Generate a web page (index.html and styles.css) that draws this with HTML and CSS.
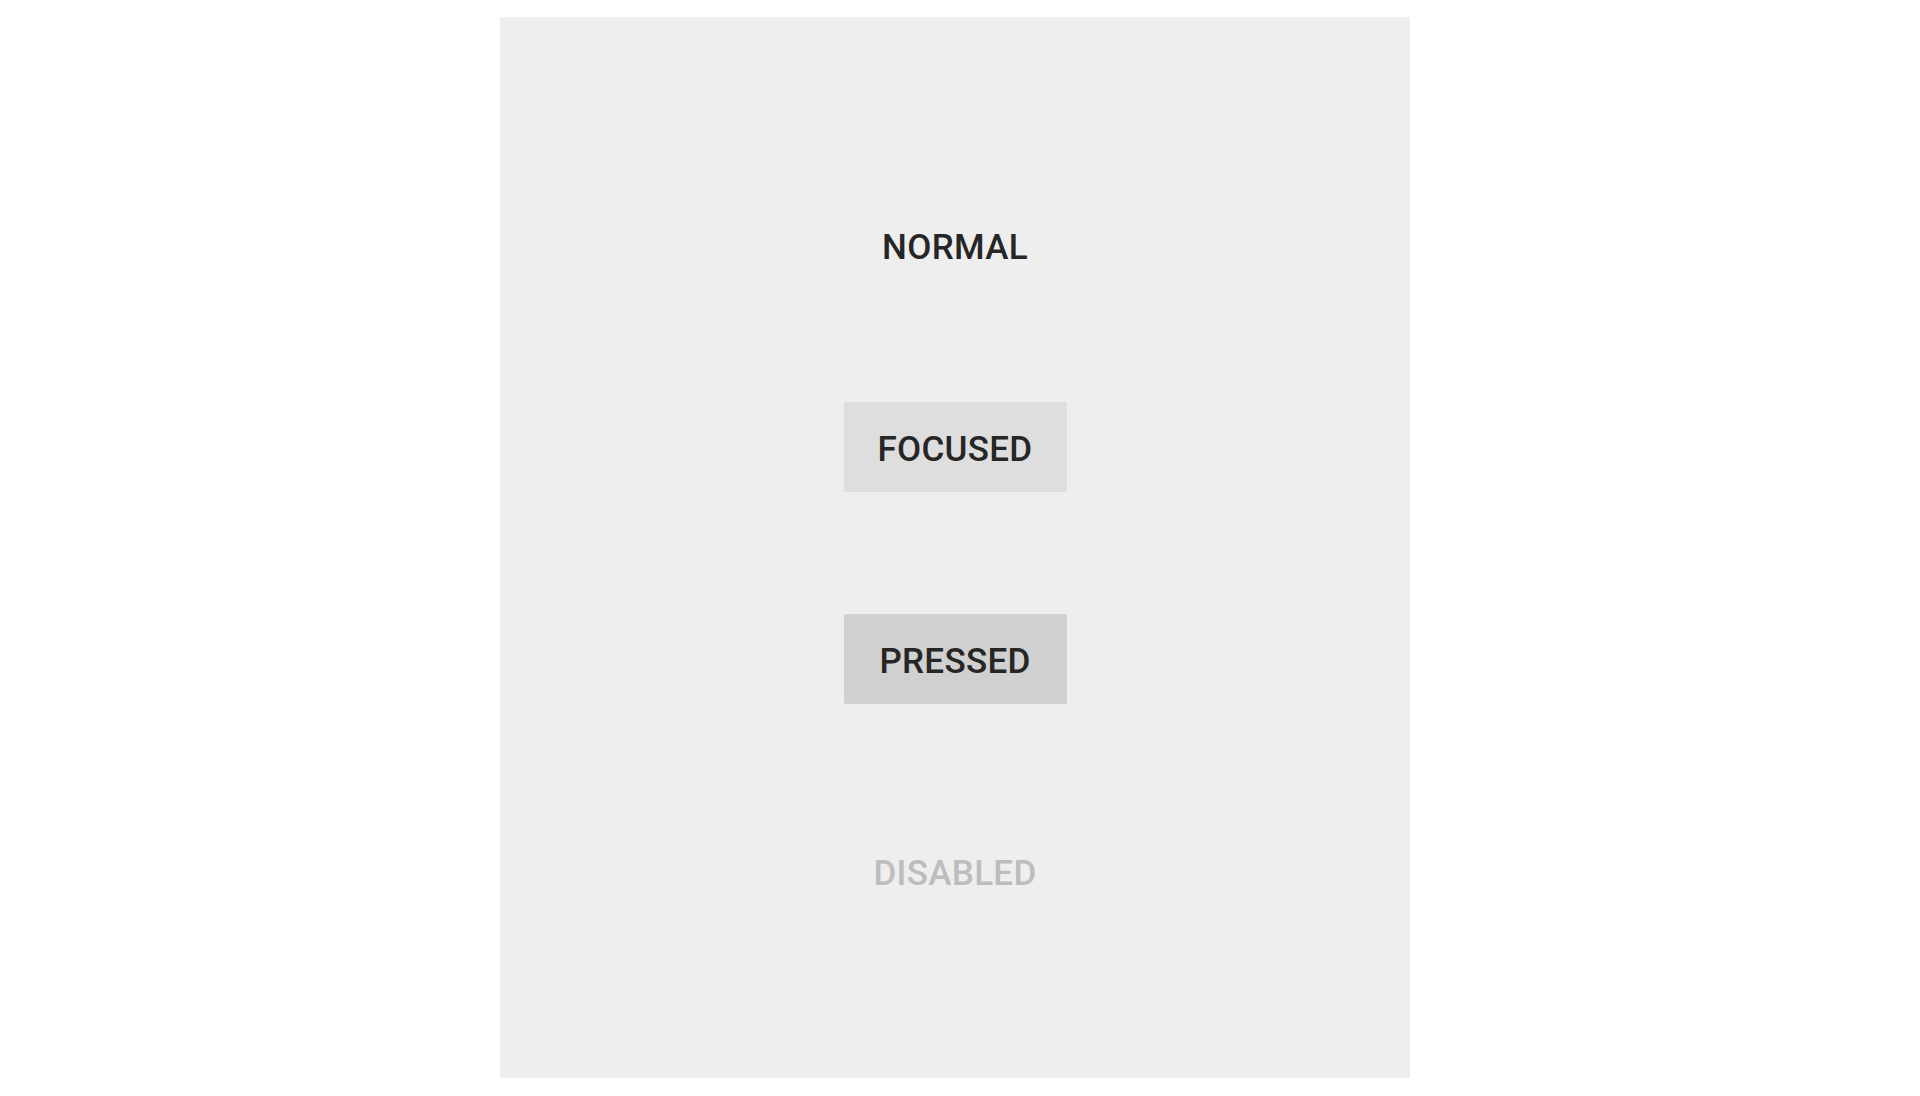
FILE: index.html
```html
<!DOCTYPE html>
<html lang="en">
<head>
  <meta charset="UTF-8">
  <title>Button states</title>
  <link rel="stylesheet" href="styles.css">
</head>
<body>

  <div class="page">
    <div class="panel">
      <div class="states">
        <button class="state-btn first">NORMAL</button>
        <button class="state-btn focused">FOCUSED</button>
        <button class="state-btn pressed">PRESSED</button>
        <button class="state-btn" disabled>DISABLED</button>
      </div>
    </div>
  </div>

</body>
</html>
```

FILE: styles.css
```css
html, body {
  margin: 0;
  padding: 0;
  height: 100%;
  background-color: #ffffff;
  font-family: "Roboto", "Liberation Sans", sans-serif;
  overflow: hidden;
}

.page {
  padding: 17px 0 0 500px;
}

.panel {
  width: 910px;
  height: 1061px;
  background-color: #eeeeee;
  box-sizing: border-box;
  padding-top: 183px;
}

.states {
  display: flex;
  flex-direction: column;
  align-items: center;
  gap: 122px;
}

/* flat text button, like a material one */
.state-btn {
  width: 223px;
  height: 90px;
  padding: 4px 0 0;
  border: none;
  border-radius: 2px;
  background-color: transparent;
  color: #262626;
  font-family: inherit;
  font-size: 35px;
  font-weight: 500;
  letter-spacing: 0.3px;
  cursor: pointer;
}

.state-btn.first {
  margin-bottom: -10px;
}

.state-btn.focused {
  background-color: #dedede;
}

.state-btn.pressed {
  background-color: #d0d0d0;
}

.state-btn:disabled {
  color: #bdbdbd;
  cursor: default;
}
```
